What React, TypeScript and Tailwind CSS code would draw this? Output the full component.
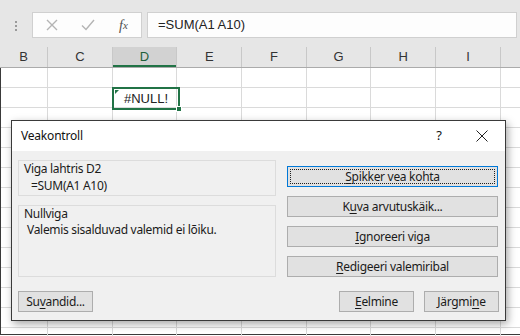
import React from "react";

const COLS = ["C", "D", "E", "F", "G", "H", "I"];

function Btn({
  children,
  className = "",
  focus = false,
}: {
  children: React.ReactNode;
  className?: string;
  focus?: boolean;
}) {
  return (
    <div
      className={
        "relative flex h-[21px] items-center justify-center border bg-[#e1e1e1] text-[12px] leading-none text-[#1b1b1b] " +
        (focus ? "border-[#0078d7] " : "border-[#adadad] ") +
        className
      }
    >
      {focus && <span className="absolute inset-[2px] border border-dotted border-[#202020]" />}
      <span className="relative">{children}</span>
    </div>
  );
}

function U({ children }: { children: React.ReactNode }) {
  return <span className="underline underline-offset-[2px]">{children}</span>;
}

export default function App() {
  const rows = Array.from({ length: 14 });
  return (
    <div
      className="relative h-[336px] w-[520px] overflow-hidden bg-white"
      style={{ fontFamily: "'Liberation Sans', Arial, sans-serif" }}
    >
      {/* formula bar area */}
      <div className="flex h-[47px] items-start bg-[#e6e6e6] pt-[12px]">
        <div className="flex h-[26px] w-[32px] items-center justify-center">
          <div className="flex flex-col gap-[2px] pt-[1px]">
            <span className="block h-[2px] w-[2px] bg-[#9a9a9a]" />
            <span className="block h-[2px] w-[2px] bg-[#9a9a9a]" />
            <span className="block h-[2px] w-[2px] bg-[#9a9a9a]" />
          </div>
        </div>
        <div className="flex h-[26px] w-[110px] items-center border border-[#d0d0d0] bg-[#fdfdfd]">
          <div className="flex w-[36px] justify-center pl-[1px]">
            <svg width="12" height="12" viewBox="0 0 12 12">
              <path d="M1 1 L11 11 M11 1 L1 11" stroke="#b4b4b4" strokeWidth="1.4" />
            </svg>
          </div>
          <div className="flex w-[37px] justify-center">
            <svg width="14" height="12" viewBox="0 0 14 12">
              <path d="M1 6.5 L5 10.5 L13 1" stroke="#b4b4b4" strokeWidth="1.4" fill="none" />
            </svg>
          </div>
          <div
            className="flex w-[35px] justify-center text-[14px] italic text-[#505050]"
            style={{ fontFamily: "'Liberation Serif', serif" }}
          >
            f<span className="relative top-[2px] text-[11px]">x</span>
          </div>
        </div>
        <div className="ml-[5px] mr-[3px] flex h-[26px] flex-1 items-center border border-[#d0d0d0] bg-[#fdfdfd] pl-[10px] text-[13px] text-[#222]">
          =SUM(A1 A10)
        </div>
      </div>

      {/* column headers */}
      <div className="flex h-[21px] border-b border-[#ababab] bg-[#e6e6e6] text-[13px] text-[#333]">
        <div className="flex w-[48px] items-center justify-center border-r border-[#c8c8c8]">B</div>
        {COLS.map((c) => (
          <div
            key={c}
            className={
              "flex w-[64.7px] items-center justify-center border-r " +
              (c === "D"
                ? "border-[#c8c8c8] bg-[#d2d2d2] text-[#1f5f3a] shadow-[inset_0_-2px_0_#217346]"
                : "border-[#c8c8c8]")
            }
          >
            {c}
          </div>
        ))}
        <div className="flex-1" />
      </div>

      {/* grid */}
      <div className="relative h-[267px] border-b border-l border-[#3a3a3a]">
        {rows.map((_, r) => (
          <div key={r} className="flex h-[20px] border-b border-[#dadada]">
            <div className="w-[47px] border-r border-[#dadada]" />
            {COLS.map((c) => (
              <div key={c} className="w-[64.7px] border-r border-[#dadada]" />
            ))}
          </div>
        ))}
        {/* active cell D2 */}
        <div className="absolute left-[111px] top-[19px] flex h-[23px] w-[68px] items-center justify-center border-2 border-[#217346] text-[13px] text-[#222]">
          <span className="absolute left-[1px] top-[1px] h-0 w-0 border-r-[4px] border-t-[4px] border-r-transparent border-t-[#217346]" />
          #NULL!
          <span className="absolute -bottom-[4px] -right-[4px] h-[6px] w-[6px] border border-white bg-[#217346]" />
        </div>
      </div>

      {/* dialog */}
      <div
        className="absolute left-[11px] top-[120px] flex h-[201px] w-[495px] flex-col border border-[#3a3a3a] bg-[#f0f0f0] shadow-[2px_3px_8px_rgba(0,0,0,0.35)]"
        style={{ fontFamily: "'Noto Sans', sans-serif" }}
      >
        <div className="flex h-[30px] items-center bg-white pl-[9px] text-[12px] tracking-[-0.2px] text-[#111]">
          <span className="flex-1">Veakontroll</span>
          <span className="w-[16px] text-center text-[13px]">?</span>
          <span className="ml-[29px] mr-[17px] flex w-[12px] justify-center">
            <svg width="12" height="12" viewBox="0 0 12 12">
              <path d="M0.5 0.5 L11.5 11.5 M11.5 0.5 L0.5 11.5" stroke="#222" strokeWidth="1" />
            </svg>
          </span>
        </div>
        <div className="flex flex-1 flex-col px-[6px] pt-[9px] text-[12px] tracking-[-0.3px] text-[#1b1b1b]">
          <div className="flex gap-[11px]">
            <div className="flex w-[258px] flex-col gap-[9px]">
              <div className="h-[36px] border border-[#dcdcdc]">
                <div className="ml-[5px] leading-[16px]">Viga lahtris D2</div>
                <div className="ml-[12px] mt-[1px] leading-[16px]">=SUM(A1 A10)</div>
              </div>
              <div className="h-[72px] border border-[#dcdcdc]">
                <div className="ml-[5px] leading-[16px]">Nullviga</div>
                <div className="ml-[8px] mt-[0px] leading-[16px]">Valemis sisalduvad valemid ei lõiku.</div>
              </div>
            </div>
            <div className="flex w-[211px] flex-col gap-[9px] pt-[6px]">
              <Btn focus>
                <U>S</U>pikker vea kohta
              </Btn>
              <Btn>
                K<U>u</U>va arvutuskäik...
              </Btn>
              <Btn>
                <U>I</U>gnoreeri viga
              </Btn>
              <Btn>
                <U>R</U>edigeeri valemiribal
              </Btn>
            </div>
          </div>
          <div className="mt-[14px] flex items-center">
            <Btn className="w-[75px]">
              Su<U>v</U>andid...
            </Btn>
            <div className="flex-1" />
            <Btn className="w-[75px]">
              <U>E</U>elmine
            </Btn>
            <Btn className="ml-[10px] w-[75px]">
              Järgmi<U>n</U>e
            </Btn>
          </div>
        </div>
      </div>
    </div>
  );
}
